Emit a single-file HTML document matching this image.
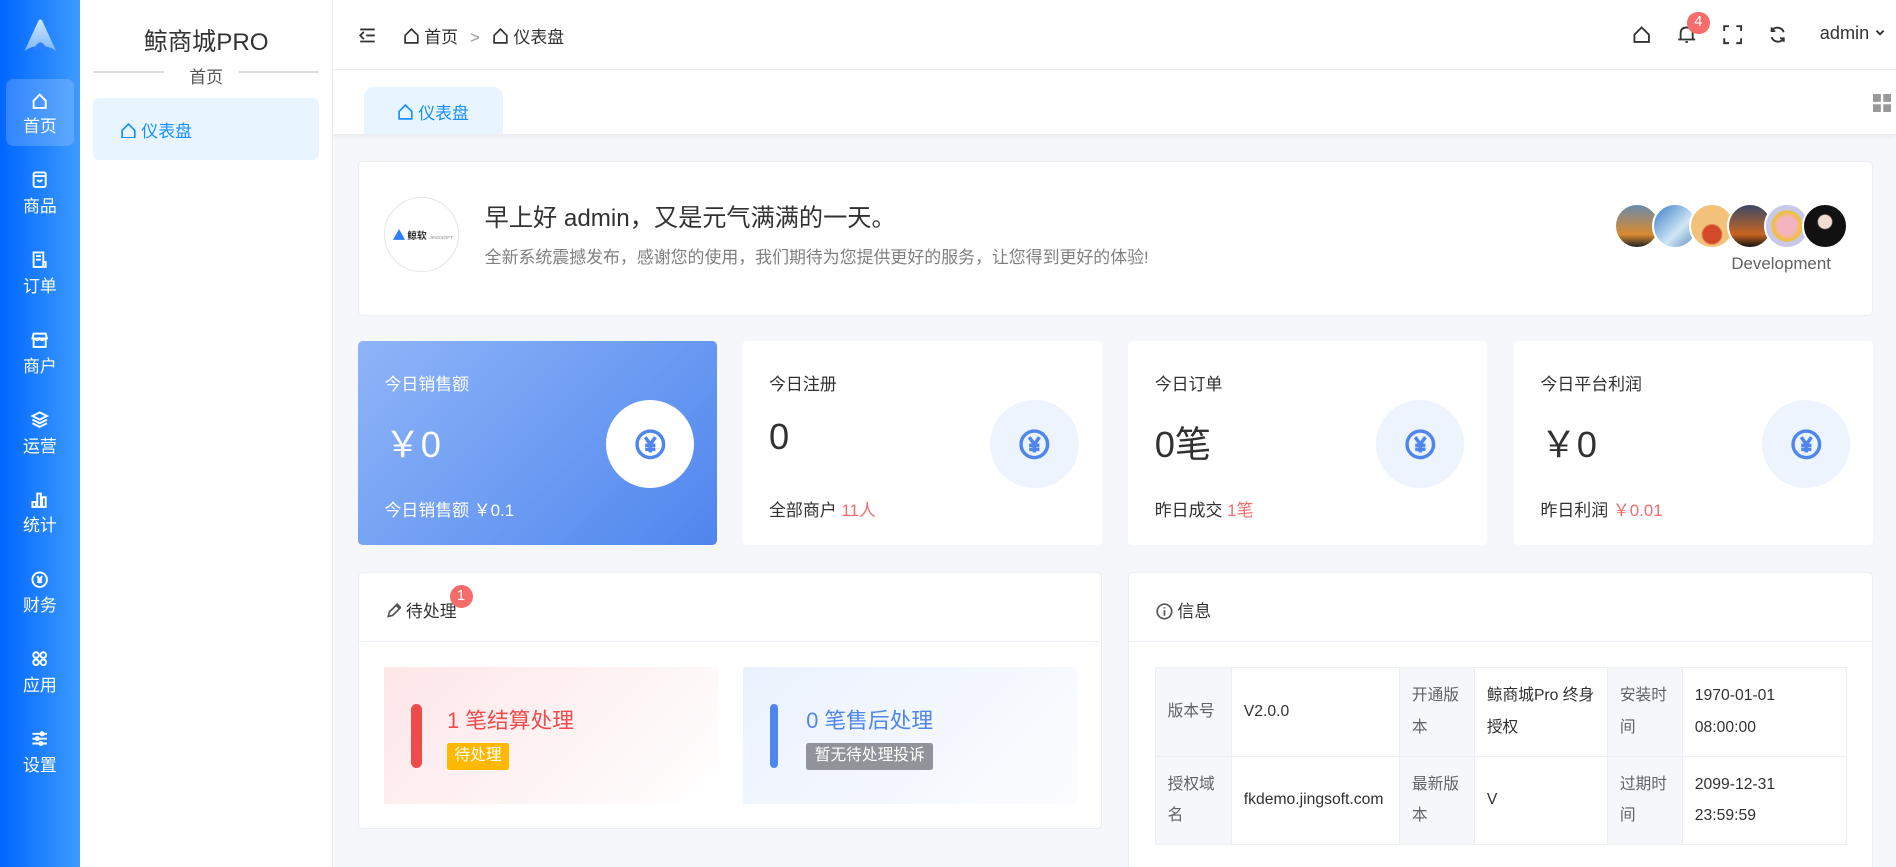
<!DOCTYPE html>
<html><head><meta charset="utf-8">
<style>
html{zoom:1.20918;overflow:hidden;height:717px;background:#f5f7fa}
*{box-sizing:border-box;margin:0;padding:0}
body{width:1568px;height:717px;overflow:hidden;position:relative;font-family:"Liberation Sans","Noto Sans CJK SC",sans-serif;background:#f5f7fa;color:#303133}
.abs{position:absolute}
.rail{left:0;top:0;width:66px;height:717px;background:linear-gradient(90deg,#0066ff,#3d9bff)}
.ri{position:absolute;left:5px;width:56px;height:56px;color:#fff;text-align:center;font-size:14px}
.ri svg{display:block;margin:10px auto 2px;width:16px;height:16px}
.side{left:66px;top:0;width:209px;height:717px;background:#fff;border-right:1px solid #eee}
.card{position:absolute;background:#fff;border-radius:4px;border:1px solid #ebeef5}
.stat{position:absolute;top:282px;width:297px;height:169px;background:#fff;border-radius:4px}
.stat .t{position:absolute;left:22px;top:24px;font-size:14px}
.stat .v{position:absolute;left:22px;top:62px;font-size:30px}
.stat .f{position:absolute;left:22px;top:128px;font-size:14px}
.stat .c{position:absolute;left:205px;top:49px;width:73px;height:73px;border-radius:50%;background:#eef4fe}
.stat .c svg{position:absolute;left:23px;top:23px}
.red{color:#f56c6c}
table{border-collapse:collapse;font-size:13px}
td{border:1px solid #ebeef5;padding:0 10px;line-height:26px;color:#303133}
td.l{background:#f5f7fa;color:#606266}
.av{position:absolute;top:168px;width:38px;height:38px;border-radius:50%;border:2px solid #fff}
</style></head><body>
<div class="abs rail">
  <svg class="abs" style="left:17px;top:14px" width="32" height="30" viewBox="0 0 32 30"><defs><linearGradient id="lg" x1="0" y1="0" x2="0" y2="1"><stop offset="0" stop-color="#cfe6ff"/><stop offset="1" stop-color="#7fb8ff"/></linearGradient></defs><path d="M3 28 L14 4 Q16 0 18 4 L29 28 Q24 24 16 24 Q8 24 3 28Z" fill="url(#lg)"/><path d="M10 28 Q16 14 22 28Z" fill="#2b7fff"/></svg>
  <div class="ri" style="top:65px;background:rgba(255,255,255,.18);border-radius:6px"><svg viewBox="0 0 16 16" fill="none" stroke="#fff" stroke-width="1.6"><path d="M3 8 L8 3 L13 8 V14 H3Z"/></svg>首页</div>
  <div class="ri" style="top:131px"><svg viewBox="0 0 16 16" fill="none" stroke="#fff" stroke-width="1.6"><rect x="3" y="2" width="10" height="12" rx="1.5"/><path d="M3 5H13M6 8Q8 11 10 8"/></svg>商品</div>
  <div class="ri" style="top:197px"><svg viewBox="0 0 16 16" fill="none" stroke="#fff" stroke-width="1.6"><path d="M3 2H11V14H3ZM5 5H9M5 8H9M11 10H13V14H11"/></svg>订单</div>
  <div class="ri" style="top:263px"><svg viewBox="0 0 16 16" fill="none" stroke="#fff" stroke-width="1.6"><path d="M3 3H13L14 7H2ZM3 7V14H13V7M4 7Q6 10 8 7Q10 10 12 7"/></svg>商户</div>
  <div class="ri" style="top:329px"><svg viewBox="0 0 16 16" fill="none" stroke="#fff" stroke-width="1.6"><path d="M8 2L14 5L8 8L2 5ZM2 8L8 11L14 8M2 11L8 14L14 11"/></svg>运营</div>
  <div class="ri" style="top:395px"><svg viewBox="0 0 16 16" fill="none" stroke="#fff" stroke-width="1.6"><path d="M2 10H5V14H2ZM6 3H9V14H6ZM10 6H13V14H10Z"/></svg>统计</div>
  <div class="ri" style="top:461px"><svg viewBox="0 0 16 16" fill="none" stroke="#fff" stroke-width="1.6"><circle cx="8" cy="8" r="6"/><path d="M6 5L8 8L10 5M8 8V11M6 8H10M6 10H10"/></svg>财务</div>
  <div class="ri" style="top:527px"><svg viewBox="0 0 16 16" fill="none" stroke="#fff" stroke-width="1.6"><circle cx="5" cy="5" r="2.3"/><circle cx="11" cy="5" r="2.3"/><circle cx="5" cy="11" r="2.3"/><circle cx="11" cy="11" r="2.3"/></svg>应用</div>
  <div class="ri" style="top:593px"><svg viewBox="0 0 16 16" fill="none" stroke="#fff" stroke-width="1.6"><path d="M2 4H14M2 8H14M2 12H14"/><circle cx="10" cy="4" r="1.3" fill="#fff"/><circle cx="6" cy="8" r="1.3" fill="#fff"/><circle cx="9" cy="12" r="1.3" fill="#fff"/></svg>设置</div>
</div>
<div class="abs side">
  <div class="abs" style="left:0;width:209px;top:18px;text-align:center;font-size:20px;color:#333">鲸商城PRO</div>
  <div class="abs" style="left:11px;top:59px;width:59px;height:1px;background:#ddd"></div>
  <div class="abs" style="left:132px;top:59px;width:66px;height:1px;background:#ddd"></div>
  <div class="abs" style="left:0;width:209px;top:52px;text-align:center;font-size:14px;color:#555">首页</div>
  <div class="abs" style="left:11px;top:81px;width:187px;height:51px;background:#e8f4ff;border-radius:5px;color:#1890ff;font-size:14px;padding:16px 0 0 22px">
    <svg width="14" height="14" viewBox="0 0 16 16" fill="none" stroke="#1890ff" stroke-width="1.6" style="vertical-align:-1px"><path d="M2 8L8 2L14 8V15H2Z"/></svg> 仪表盘</div>
</div>
<!-- header -->
<div class="abs" style="left:275px;top:0;width:1293px;height:58px;background:#fff;border-bottom:1px solid #eee;font-size:14px;color:#303133">
  <svg class="abs" style="left:22px;top:22px" width="14" height="14" viewBox="0 0 14 14" fill="none" stroke="#333" stroke-width="1.5"><path d="M1 2H13M6 7H13M1 12H13M4 4L1 7L4 10"/></svg>
  <div class="abs" style="left:58px;top:19px;white-space:nowrap">
    <svg width="14" height="14" viewBox="0 0 16 16" fill="none" stroke="#333" stroke-width="1.6" style="vertical-align:-1px"><path d="M2 8L8 2L14 8V15H2Z"/></svg> 首页 <span style="color:#999;margin:0 6px">&gt;</span> <svg width="14" height="14" viewBox="0 0 16 16" fill="none" stroke="#333" stroke-width="1.6" style="vertical-align:-1px"><path d="M2 8L8 2L14 8V15H2Z"/></svg> 仪表盘</div>
  <svg class="abs" style="left:1075px;top:21px" width="16" height="16" viewBox="0 0 16 16" fill="none" stroke="#333" stroke-width="1.5"><path d="M2 8L8 2L14 8V14H2Z"/></svg>
  <svg class="abs" style="left:1112px;top:21px" width="16" height="16" viewBox="0 0 16 16" fill="none" stroke="#333" stroke-width="1.5"><path d="M3 12V7Q3 2 8 2Q13 2 13 7V12ZM1 12H15M7 14H9"/></svg>
  <div class="abs" style="left:1120px;top:10px;width:19px;height:18px;border-radius:9px;background:#f56c6c;color:#fff;font-size:12px;text-align:center;line-height:18px">4</div>
  <svg class="abs" style="left:1150px;top:21px" width="16" height="16" viewBox="0 0 16 16" fill="none" stroke="#333" stroke-width="1.6"><path d="M1 5V1H5M11 1H15V5M15 11V15H11M5 15H1V11"/></svg>
  <svg class="abs" style="left:1187px;top:21px" width="16" height="16" viewBox="0 0 16 16" fill="none" stroke="#333" stroke-width="1.6"><path d="M13 6A5.5 5.5 0 0 0 3 5M3 10A5.5 5.5 0 0 0 13 11M3 2V5H6M13 14V11H10"/></svg>
  <div class="abs" style="left:1230px;top:19px;font-size:15px;color:#333">admin <svg width="10" height="10" viewBox="0 0 10 10" fill="none" stroke="#333" stroke-width="1.6"><path d="M2 3L5 6L8 3"/></svg></div>
</div>
<!-- tabs -->
<div class="abs" style="left:275px;top:58px;width:1293px;height:53px;background:#fff;box-shadow:0 2px 4px rgba(0,0,0,.05)">
  <div class="abs" style="left:26px;top:14px;width:115px;height:39px;background:#e8f4ff;border-radius:8px 8px 0 0;color:#1890ff;font-size:14px;padding:10px 0 0 27px">
    <svg width="14" height="14" viewBox="0 0 16 16" fill="none" stroke="#1890ff" stroke-width="1.6" style="vertical-align:-1px"><path d="M2 8L8 2L14 8V15H2Z"/></svg> 仪表盘</div>
  <svg class="abs" style="left:1274px;top:20px" width="15" height="15" viewBox="0 0 15 15" fill="#999"><rect width="6.5" height="6.5"/><rect x="8.5" width="6.5" height="6.5"/><rect y="8.5" width="6.5" height="6.5"/><rect x="8.5" y="8.5" width="6.5" height="6.5"/></svg>
</div>
<!-- welcome -->
<div class="card" style="left:296px;top:133px;width:1253px;height:128px">
  <div class="abs" style="left:21px;top:29px;width:62px;height:62px;border-radius:50%;border:1px solid #e5e5e5;font-size:8px;font-weight:bold;padding-top:25px;padding-left:6px;white-space:nowrap"><svg width="10" height="9" viewBox="0 0 10 9" style="vertical-align:-1px"><path d="M0 9L5 0L10 9Z" fill="#2b7fff"/></svg> 鲸软 <span style="font-size:4px;color:#888;font-weight:normal">JINGSOFT</span></div>
  <div class="abs" style="left:104px;top:30px;font-size:20px;color:#303133">早上好 admin，又是元气满满的一天。</div>
  <div class="abs" style="left:104px;top:67px;font-size:14px;color:#808080">全新系统震撼发布，感谢您的使用，我们期待为您提供更好的服务，让您得到更好的体验!</div>
  <div class="abs" style="left:1135px;top:76px;font-size:14px;color:#606266">Development</div>
</div>
<div class="av" style="left:1335px;background:linear-gradient(#6a8aa8,#d98a30 70%,#222)"></div>
<div class="av" style="left:1366px;background:linear-gradient(135deg,#3a7ec8,#cfe6f5 60%,#5a8db8)"></div>
<div class="av" style="left:1397px;background:radial-gradient(circle at 50% 70%,#d24a2a 25%,#f2c27a 30%)"></div>
<div class="av" style="left:1428px;background:linear-gradient(#3a4a66,#c86420 70%,#111)"></div>
<div class="av" style="left:1459px;background:radial-gradient(circle,#f4b3c0 30%,#f0c030 50%,#c8c8e8 55%)"></div>
<div class="av" style="left:1490px;background:radial-gradient(circle at 50% 40%,#f3dcd0 20%,#111 24%)"></div>
<!-- stats -->
<div class="stat" style="left:296px;background:linear-gradient(135deg,#8fb5f8,#4f86ee);color:#fff">
  <div class="t">今日销售额</div><div class="v">￥0</div><div class="f">今日销售额 ￥0.1</div>
  <div class="c" style="background:#fff"><svg width="27" height="27" viewBox="0 0 16 16" fill="none" stroke="#4f86ee" stroke-width="1.7"><circle cx="8" cy="8" r="6.5"/><path d="M5.5 4.5L8 8L10.5 4.5M8 8V12M5.5 8.5H10.5M5.5 10.5H10.5"/></svg></div>
</div>
<div class="stat" style="left:614px">
  <div class="t">今日注册</div><div class="v">0</div><div class="f">全部商户 <span class="red">11人</span></div>
  <div class="c"><svg width="27" height="27" viewBox="0 0 16 16" fill="none" stroke="#4f86ee" stroke-width="1.7"><circle cx="8" cy="8" r="6.5"/><path d="M5.5 4.5L8 8L10.5 4.5M8 8V12M5.5 8.5H10.5M5.5 10.5H10.5"/></svg></div>
</div>
<div class="stat" style="left:933px">
  <div class="t">今日订单</div><div class="v">0笔</div><div class="f">昨日成交 <span class="red">1笔</span></div>
  <div class="c"><svg width="27" height="27" viewBox="0 0 16 16" fill="none" stroke="#4f86ee" stroke-width="1.7"><circle cx="8" cy="8" r="6.5"/><path d="M5.5 4.5L8 8L10.5 4.5M8 8V12M5.5 8.5H10.5M5.5 10.5H10.5"/></svg></div>
</div>
<div class="stat" style="left:1252px">
  <div class="t">今日平台利润</div><div class="v">￥0</div><div class="f">昨日利润 <span class="red">￥0.01</span></div>
  <div class="c"><svg width="27" height="27" viewBox="0 0 16 16" fill="none" stroke="#4f86ee" stroke-width="1.7"><circle cx="8" cy="8" r="6.5"/><path d="M5.5 4.5L8 8L10.5 4.5M8 8V12M5.5 8.5H10.5M5.5 10.5H10.5"/></svg></div>
</div>
<!-- pending -->
<div class="card" style="left:296px;top:473px;width:615px;height:213px">
  <div class="abs" style="left:0;top:0;width:613px;height:57px;border-bottom:1px solid #ebeef5"></div>
  <div class="abs" style="left:22px;top:20px;font-size:14px;color:#303133"><svg width="13" height="13" viewBox="0 0 14 14" fill="none" stroke="#555" stroke-width="1.5" style="vertical-align:-1px"><path d="M2 12L3 8L10 1L13 4L6 11ZM9 2L12 5"/></svg> 待处理</div>
  <div class="abs" style="left:75px;top:10px;width:19px;height:19px;border-radius:50%;background:#f56c6c;color:#fff;font-size:12px;text-align:center;line-height:19px">1</div>
  <div class="abs" style="left:21px;top:78px;width:276px;height:113px;background:linear-gradient(135deg,#fde6e8,#fff)">
    <div class="abs" style="left:22px;top:30px;width:9px;height:53px;border-radius:5px;background:#f04b4b"></div>
    <div class="abs" style="left:52px;top:30px;font-size:18px;color:#f04b4b">1 笔结算处理</div>
    <div class="abs" style="left:52px;top:63px;background:#ffb800;color:#fff;font-size:13px;padding:0 6px;line-height:22px;border-radius:2px">待处理</div>
  </div>
  <div class="abs" style="left:318px;top:78px;width:276px;height:113px;background:linear-gradient(135deg,#ebf2fd,#fbfcff)">
    <div class="abs" style="left:22px;top:30px;width:7px;height:53px;border-radius:4px;background:#4f86ee"></div>
    <div class="abs" style="left:52px;top:30px;font-size:18px;color:#4f86ee">0 笔售后处理</div>
    <div class="abs" style="left:52px;top:63px;background:#909399;color:#fff;font-size:13px;padding:0 7px;line-height:22px;border-radius:2px">暂无待处理投诉</div>
  </div>
</div>
<!-- info -->
<div class="card" style="left:933px;top:473px;width:616px;height:250px">
  <div class="abs" style="left:0;top:0;width:614px;height:57px;border-bottom:1px solid #ebeef5"></div>
  <div class="abs" style="left:22px;top:20px;font-size:14px;color:#303133"><svg width="14" height="14" viewBox="0 0 14 14" fill="none" stroke="#555" stroke-width="1.4" style="vertical-align:-2px"><circle cx="7" cy="7" r="6"/><path d="M7 6V10.5M7 3.5V4.5"/></svg> 信息</div>
  <table class="abs" style="left:21px;top:78px;width:573px">
    <tr style="height:73px"><td class="l" style="width:63px">版本号</td><td style="width:139px">V2.0.0</td><td class="l" style="width:62px">开通版本</td><td style="width:110px">鲸商城Pro 终身授权</td><td class="l" style="width:62px">安装时间</td><td>1970-01-01 08:00:00</td></tr>
    <tr style="height:73px"><td class="l">授权域名</td><td>fkdemo.jingsoft.com</td><td class="l">最新版本</td><td>V</td><td class="l">过期时间</td><td>2099-12-31 23:59:59</td></tr>
  </table>
</div>
</body></html>
